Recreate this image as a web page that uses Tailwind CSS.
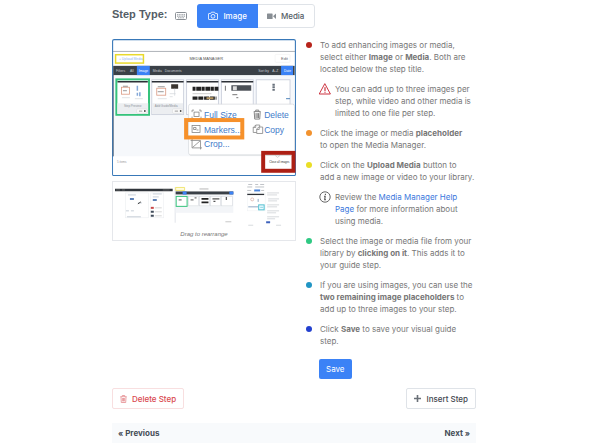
<!DOCTYPE html>
<html lang="en">
<head>
  <meta charset="UTF-8">
  <meta name="viewport" content="width=device-width, initial-scale=1.0">
  <title>Add Images or Media</title>
  <script src="https://cdn.jsdelivr.net/npm/@tailwindcss/browser@4"></script>
</head>
<body class="bg-white font-['Inter','Liberation_Sans',sans-serif] text-[8px] leading-3 text-[#777]">
  <main class="pl-28 pr-[116px] pt-1">
    <!-- Step type -->
    <header class="flex items-center">
      <h1 class="font-['Liberation_Sans',sans-serif] text-[11px] font-bold text-[#555d66] pb-1">Step Type:</h1>
      <svg class="w-3 h-2 ml-2" viewBox="0 0 12 8" fill="none" stroke="#8a9096">
        <rect x=".5" y=".5" width="11" height="7" rx="1"/>
        <path d="M2 2.7h8M2 4.2h8M3 5.8h6" stroke-width=".9" stroke-dasharray="1.2 .5"/>
      </svg>
      <div class="flex ml-[10px] h-6 rounded-[3px] border border-[#dfe3e8] font-medium">
        <button class="flex items-center gap-[5px] px-[11px] -m-px rounded-l-[3px] bg-[#3b82f6] text-white">
          <svg class="w-[10px] h-[10px]" viewBox="0 0 10 10" fill="none" stroke="#fff" stroke-width=".8">
            <path d="M1 2.5h1.7L3.4 1.2h3.2l.7 1.3H9a.5.5 0 0 1 .5.5v5a.5.5 0 0 1-.5.5H1A.5.5 0 0 1 .5 8V3a.5.5 0 0 1 .5-.5z"/>
            <circle cx="5" cy="5.3" r="1.9"/>
          </svg>
          Image
        </button>
        <button class="flex items-center gap-[5px] px-[10px] text-[#555d66]">
          <svg class="w-[9px] h-[10px]" viewBox="0 0 9 10" fill="#888e94">
            <rect x="0" y="2.5" width="5.6" height="5.5" rx=".6"/>
            <path d="M6 5.2L9 2.5v5.5z"/>
          </svg>
          Media
        </button>
      </div>
    </header>

    <div class="flex gap-[10px] pt-[11px]">
      <!-- Step images -->
      <section class="flex-1 min-w-0">
        <svg class="block w-full" viewBox="112 39 185 138" role="img" aria-label="Media Manager" font-family="Liberation Sans, sans-serif">
          <rect x="112.6" y="39.6" width="183.8" height="136.8" rx="1.5" fill="#fff" stroke="#3878b8" stroke-width="1.1"/>
          <path d="M113 51.5h183" stroke="#8a9097" stroke-width=".7"/>
          <rect x="115.6" y="54.8" width="28" height="8.4" fill="#fff" stroke="#e9d92c" stroke-width="1.5"/>
          <text x="119" y="60.4" font-size="3.4" fill="#8fb6ef">+ Upload Media</text>
          <text x="190" y="60.6" font-size="4" fill="#555">MEDIA MANAGER</text>
          <rect x="276" y="54.5" width="15" height="8" rx="1" fill="#fff" stroke="#f0f0f0" stroke-width=".6"/>
          <text x="282" y="60.4" font-size="4" fill="#666">Edit</text>
          <!-- filter bar -->
          <rect x="113.2" y="66" width="182.4" height="9.5" fill="#3a4047"/>
          <rect x="137" y="66" width="13" height="9.5" fill="#3b82f6"/>
          <rect x="282" y="66" width="12" height="9.5" fill="#3b82f6"/>
          <g font-size="3.4" fill="#c4c8cc">
            <text x="116" y="72">Filters</text>
            <text x="130" y="72">All</text>
            <text x="139" y="72" fill="#fff">Image</text>
            <text x="153" y="72">Media</text>
            <text x="165" y="72">Documents</text>
            <text x="259" y="72">Sort by</text>
            <text x="273" y="72">A–Z</text>
            <text x="285" y="72" fill="#fff">Date</text>
          </g>
          <!-- file cards -->
          <rect x="113.2" y="75.5" width="182.4" height="91" fill="#f6f8fb"/>
          <g fill="#fff" stroke="#cbd0dc" stroke-width=".9">
            <rect x="152" y="80" width="32" height="35"/>
            <rect x="187" y="80" width="32" height="35"/>
            <rect x="222" y="80" width="32" height="35"/>
            <rect x="257" y="80" width="34" height="35"/>
          </g>
          <rect x="116.4" y="79.6" width="32.8" height="35.6" fill="#fff" stroke="#35c37b" stroke-width="2"/>
          <path d="M117.5 82h30.5M152 82h32M187 82h32M222 82h32" stroke="#2c3036" stroke-width="1.6"/>
          <path d="M117.4 103.5h31v11h-31zM152.4 103.5h31v11h-31z" fill="#eceef1"/>
          <g fill="none" stroke="#da9982" stroke-width=".8">
            <rect x="121.5" y="87.5" width="8" height="7"/>
            <rect x="157" y="88.5" width="9" height="7"/>
          </g>
          <path d="M123 86.5h5M123 91h4M158 87h7M158 92h6" stroke="#555" stroke-width=".6"/>
          <path d="M137.5 86v5M137.5 93v3M140 92.5v4" stroke="#84a8d8" stroke-width="1.5"/>
          <path d="M122 98h8M135 99h8M158 99h9M170 97h3" stroke="#d4d7db" stroke-width=".7"/>
          <rect x="171.5" y="84.5" width="7" height="4.5" fill="#3a3530"/>
          <path d="M175 89v7M170 94h6" stroke="#cfd4da" stroke-width=".7"/>
          <path d="M193 89h26" stroke="#222" stroke-width="4" stroke-dasharray="3 .7 5 .5"/>
          <path d="M193 98.5h24" stroke="#222" stroke-width="3.2" stroke-dasharray="5 .8"/>
          <path d="M207 98.5h7" stroke="#b49663" stroke-width="2"/>
          <path d="M193 94h19" stroke="#aaa" stroke-width=".6"/>
          <rect x="232" y="85.5" width="20" height="5.5" fill="#4b5056"/>
          <rect x="233.5" y="86.5" width="4" height="4" fill="#ddd"/>
          <path d="M233 95h5M237 98h2M226 86v5" stroke="#666" stroke-width=".9"/>
          <path d="M274.5 84v7" stroke="#67707b" stroke-width="2.4" stroke-dasharray="2 .6"/>
          <path d="M287 99h4" stroke="#4f83b8"/>
          <g font-size="3" fill="#8c9299">
            <text x="124" y="107.4">Step Preview</text>
            <text x="155" y="107.4">Add Guide/Media</text>
          </g>
          <rect x="137" y="109.5" width="10" height="4" rx=".5" fill="#fff" stroke="#ccc" stroke-width=".4"/>
          <rect x="173" y="109.5" width="10" height="4" rx=".5" fill="#fff" stroke="#ccc" stroke-width=".4"/>
          <path d="M139 111.5h3.5M175 111.5h3.5" stroke="#999"/>
          <path d="M145 110.5v2M181 110.5v2" stroke="#555" stroke-width="1.5"/>
          <path d="M113.2 157h182.4v18.5h-182.4z" fill="#fff"/>
          <text x="117" y="163.5" font-size="3" fill="#999">5 items</text>
          <path d="M113.2 75v82" stroke="#4a6078"/>
          <!-- image menu -->
          <rect x="189.5" y="105.5" width="106" height="51" rx="2" fill="#e4e6e9"/>
          <rect x="189" y="104.5" width="106.5" height="51" rx="2" fill="#fff" stroke="#d5d8dc" stroke-width=".7"/>
          <g font-size="8.6" fill="#3f7cca">
            <text x="204.5" y="118.5">Full Size</text>
            <text x="265" y="118.5">Delete</text>
            <text x="204.5" y="133.5">Markers...</text>
            <text x="265" y="133.5">Copy</text>
            <text x="204.5" y="148">Crop...</text>
          </g>
          <g fill="none" stroke="#858585" stroke-width=".8">
            <rect x="194.5" y="112.5" width="5" height="4.5"/>
            <path d="M192.5 112.5v-2h2M199.5 110.5h2v2M201.5 117v2h-2M194.5 119h-2v-2"/>
            <rect x="192.5" y="126" width="8" height="7"/>
            <path d="M194 128h2.5v2H194zM197 130.5h2"/>
            <path d="M192.5 141h8.5v7.5h-8.5zM191 141h1.5M192.5 139.5v1.5M201 148.5h1.500M201 148.500v1.500M193 148l7.500-6.500"/>
            <path d="M255 112.5l.5 7h5l.5-7M254.5 112h7M256.500 112v-1.500h3v1.500M256.800 113.500v5M258 113.500v5M259.300 113.500v5" stroke-width="1"/>
            <path d="M257.500 133h-3.500v-5l2.500-2.500h4v2M254 128h2.500v-2.500M257.500 129.500l2-2h4v6.500h-6zM257.500 130h2.500v-2.500"/>
          </g>
          <rect x="186.5" y="120.5" width="56.5" height="17.5" fill="none" stroke="#f6912b" stroke-width="4"/>
          <rect x="264" y="153.5" width="30.5" height="18" fill="#fff" stroke="#ad1f14" stroke-width="4"/>
          <path d="M266 156h26.5M276 156l2.5 2 2.5-2" fill="#fff" stroke="#bbb" stroke-width=".6"/>
          <text x="270" y="163.5" font-size="2.8" fill="#333">Close all images</text>
        </svg>

        <figure class="mt-[5px] border border-[#e5e7eb]">
          <svg class="block w-full" viewBox="113 183 183 46" role="img" aria-label="Step image thumbnails">
            <!-- first thumbnail -->
            <path d="M115 191h58" stroke="#30353b" stroke-width="2.6"/>
            <path d="M116 191h4M122 191h3M163 191h7" stroke="#777" stroke-width=".7"/>
            <g fill="#fff" stroke="#eceef1" stroke-width=".6">
              <rect x="125.5" y="194" width="23" height="25"/>
              <rect x="151" y="194" width="13" height="25"/>
            </g>
            <path d="M130 200h4M153 201h4" stroke="#5c80b6" stroke-width="2"/>
            <path d="M128 196h8M153 195h9M138 204h4M126 212h3M131 212h3M127 218h14M153 198h6" stroke="#bac2ce" stroke-width=".8"/>
            <path d="M138 205l3-2" stroke="#444"/>
            <path d="M151 209h3" stroke="#c94848" stroke-width="2"/>
            <path d="M151 213h3M151 217h3" stroke="#404b5a" stroke-width="2"/>
            <path d="M155 209h7M155 213h7M155 217h7" stroke="#bbb" stroke-width=".6"/>
            <!-- second thumbnail -->
            <path d="M175.5 188v36" stroke="#ccd2da" stroke-width=".6"/>
            <rect x="176" y="196" width="58" height="18" fill="#f3f5f8"/>
            <path d="M176 188.5h9v3h-9z" fill="#fffbe0" stroke="#eddf59" stroke-width=".8"/>
            <path d="M200 190h9" stroke="#999" stroke-width=".7"/>
            <rect x="176" y="192.5" width="58" height="3" fill="#3a4047"/>
            <path d="M183 194h4M230 194h4" stroke="#3b82f6" stroke-width="3"/>
            <g fill="#fff" stroke="#d1d5db" stroke-width=".5">
              <rect x="189" y="197.5" width="10" height="9.5"/>
              <rect x="200" y="197.5" width="10" height="9.5"/>
              <rect x="211" y="197.5" width="10" height="9.5"/>
              <rect x="222" y="197.5" width="11" height="9.5"/>
            </g>
            <rect x="176.5" y="197.5" width="11" height="10" fill="#fff" stroke="#35c37b"/>
            <path d="M179 201h3M191 201h3M195 199h2" stroke="#777" stroke-width="1.2"/>
            <path d="M202 200h7M202 203.5h7" stroke="#222" stroke-width="1.6"/>
            <path d="M213 200h7M214 202.5h2M227 198v3" stroke="#555" stroke-width="1.3"/>
            <path d="M226 223h6" stroke="#bbb" stroke-width=".8"/>
            <!-- third thumbnail -->
            <path d="M249 185.5h4M256 185.5h3M261 185.5h4M248 188h5M256 188h9M248 191.5h4M262 191.5h3" stroke="#a4a9b0" stroke-width=".7"/>
            <path d="M255 191.500h6" stroke="#4b83d8" stroke-width="2"/>
            <rect x="248" y="194" width="18" height="18" fill="#fff" stroke="#edf0f3" stroke-width=".5"/>
            <path d="M248 195.5h17" stroke="#2c3036" stroke-width="1.3"/>
            <circle cx="253" cy="200.5" r="1.5" fill="none" stroke="#c78b80" stroke-width=".5"/>
            <path d="M259 200v3M249 208h10" stroke="#90a7c4"/>
            <rect x="259.5" y="206" width="5.5" height="5" fill="#eafaff" stroke="#52bfd0"/>
            <path d="M261 208.5h3" stroke="#52bfd0" stroke-width=".6"/>
            <path d="M268 194h12M268 196h10M269 200h11M269 202h9M268 206h12M268 208h10M268 212h12M268 214h9M268 218h12M268 220h8" stroke="#bcc0c5" stroke-width=".6"/>
            <path d="M267 223.5h4" stroke="#3e62bc" stroke-width="2"/>
            <path d="M249 226.5h5M277 226.5h5" stroke="#c7cbd0" stroke-width=".7"/>
          </svg>
          <figcaption class="text-center italic text-[6px] leading-3 font-['Liberation_Sans',sans-serif]">Drag to rearrange</figcaption>
        </figure>
      </section>

      <!-- Instructions -->
      <section class="w-[170px] shrink-0">
        <ul class="flex flex-col gap-2 whitespace-nowrap">
          <li class="flex gap-2">
            <span class="w-[6px] h-[6px] mt-[3px] rounded-full bg-[#b7241b]"></span>
            <p>To add enhancing images or media,<br>select either <b>Image</b> or <b>Media</b>. Both are<br>located below the step title.</p>
          </li>
          <li class="flex gap-1 pl-[13px]">
            <svg class="w-3 h-3" viewBox="0 0 12 12" fill="none" stroke="#cc3340" stroke-linejoin="round" stroke-linecap="round">
              <path d="M6 1L11.4 11H.6z"/>
              <path d="M6 4.5v3M6 9.2v.1" stroke-width="1.2"/>
            </svg>
            <p>You can add up to three images per<br>step, while video and other media is<br>limited to one file per step.</p>
          </li>
          <li class="flex gap-2">
            <span class="w-[6px] h-[6px] mt-[3px] rounded-full bg-[#f2922e]"></span>
            <p>Click the image or media <b>placeholder</b><br>to open the Media Manager.</p>
          </li>
          <li class="flex gap-2">
            <span class="w-[6px] h-[6px] mt-[3px] rounded-full bg-[#eade26]"></span>
            <p>Click on the <b>Upload Media</b> button to<br>add a new image or video to your library.</p>
          </li>
          <li class="flex gap-1 pl-[13px]">
            <svg class="w-3 h-3" viewBox="0 0 12 12" fill="none" stroke="#555">
              <circle cx="6" cy="6" r="5.2" stroke-width=".9"/>
              <path d="M6.4 2.800v1.100M5 5.200h1.200L5.700 8.700H7" stroke-width="1.1"/>
            </svg>
            <p>Review the <a href="#" class="text-[#3b78dd]">Media Manager Help<br>Page</a> for more information about<br>using media.</p>
          </li>
          <li class="flex gap-2">
            <span class="w-[6px] h-[6px] mt-[3px] rounded-full bg-[#2fc983]"></span>
            <p>Select the image or media file from your<br>library by <b>clicking on it</b>. This adds it to<br>your guide step.</p>
          </li>
          <li class="flex gap-2">
            <span class="w-[6px] h-[6px] mt-[3px] rounded-full bg-[#2195c4]"></span>
            <p>If you are using images, you can use the<br><b>two remaining image placeholders</b> to<br>add up to three images to your step.</p>
          </li>
          <li class="flex gap-2">
            <span class="w-[6px] h-[6px] mt-[3px] rounded-full bg-[#2340cf]"></span>
            <p>Click <b>Save</b> to save your visual guide<br>step.</p>
          </li>
        </ul>
        <button class="mt-3 ml-[13px] h-5 px-[7px] rounded-[2px] bg-[#3b82f6] text-white">Save</button>
      </section>
    </div>

    <!-- Step actions -->
    <div class="flex justify-between pt-[9px] font-medium">
      <button class="flex items-center gap-[5px] h-[21px] px-[7px] rounded-[2px] border border-[#f8dfe0] text-[#d9494f]">
        <svg class="w-[7px] h-2" viewBox="0 0 7 8" fill="none" stroke="#e58a8e" stroke-width=".8">
          <path d="M.3 1.7h6.4M2.3 1.5V.5h2.4v1M1 1.900l.3 5.600h4.400L6 1.900M2.600 3v3.400M3.500 3v3.400M4.400 3v3.400"/>
        </svg>
        Delete Step
      </button>
      <button class="flex items-center gap-[5px] h-[21px] px-[7px] rounded-[2px] border border-[#dfe3e8] text-[#3f464e]">
        <svg class="w-[7px] h-[7px]" viewBox="0 0 7 7" stroke="#6b7178" stroke-width="1.6">
          <path d="M3.5 0v7M0 3.5h7"/>
        </svg>
        Insert Step
      </button>
    </div>

    <nav class="flex items-center justify-between mt-[14px] h-5 px-[6px] bg-[#f8fafc] font-bold text-[#454d57]">
      <a href="#">« Previous</a>
      <a href="#">Next »</a>
    </nav>
  </main>
</body>
</html>
